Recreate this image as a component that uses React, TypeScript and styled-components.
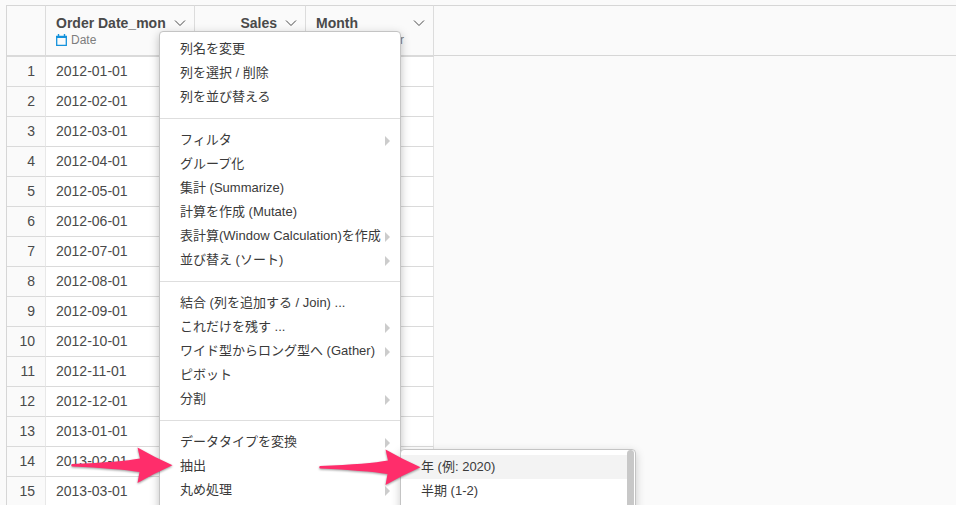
import React from "react";
import styled, { createGlobalStyle } from "styled-components";

const GlobalStyle = createGlobalStyle`
  *, *::before, *::after { box-sizing: border-box; }
  body {
    margin: 0;
    background: #fafafa;
    color: #4a4a4a;
    font-family: "Liberation Sans", "Noto Sans CJK JP", sans-serif;
    font-size: 14px;
  }
`;

const Page = styled.main`
  position: relative;
  height: 100vh;
  padding: 5px 0 0 6px;
  overflow: hidden;
`;

const Sheet = styled.div`
  display: flex;
  align-items: flex-start;
`;

const Filler = styled.div`
  flex: 1;
  height: 51px;
  border-top: 1px solid #d6d6d6;
  border-bottom: 1px solid #d6d6d6;
`;

const Grid = styled.table`
  width: 428px;
  table-layout: fixed;
  border-collapse: separate;
  border-spacing: 0;
  border-left: 1px solid #d6d6d6;
`;

const HeadCell = styled.th<{ $width: number }>`
  width: ${(p) => p.$width}px;
  height: 52px;
  padding: 8px 8px 0 10px;
  border-top: 1px solid #d6d6d6;
  border-right: 1px solid #dcdcdc;
  border-bottom: 2px solid #dadada;
  text-align: left;
  vertical-align: top;
  font-weight: 400;
`;

const HeadTitle = styled.div<{ $end?: boolean }>`
  display: flex;
  align-items: center;
  justify-content: ${(p) => (p.$end ? "flex-end" : "space-between")};
  gap: 8px;
  height: 17px;
  font-weight: 700;
  white-space: nowrap;
`;

const HeadButton = styled.button`
  display: flex;
  padding: 0;
  border: 0;
  background: none;
  color: #4a4a4a;
`;

const HeadType = styled.div<{ $end?: boolean }>`
  display: flex;
  align-items: center;
  justify-content: ${(p) => (p.$end ? "flex-end" : "flex-start")};
  gap: 4px;
  height: 17px;
  font-size: 12px;
  color: #7d7d7d;
`;

const TypeTail = styled.span`
  padding-right: 21px;
`;

const RowNumber = styled.th`
  height: 30px;
  padding: 0 10px 2px 0;
  border-right: 1px solid #e8e8e8;
  border-bottom: 1px solid #dadada;
  text-align: right;
  font-weight: 400;
`;

const Cell = styled.td`
  height: 30px;
  padding: 0 10px 2px;
  border-right: 1px solid #e4e4e4;
  border-bottom: 1px solid #dadada;
  background: #fff;
`;

const Item = styled.button<{ $active?: boolean }>`
  display: flex;
  align-items: center;
  justify-content: space-between;
  width: 100%;
  height: 24px;
  padding: 0 10px 0 20px;
  border: 0;
  background: ${(p) => (p.$active ? "#f3f3f3" : "transparent")};
  color: #3a3a3a;
  font: inherit;
  font-size: 13px;
  line-height: 22px;
  text-align: left;
  white-space: nowrap;
`;

const Menu = styled.div`
  position: absolute;
  top: 31px;
  left: 159px;
  width: 242px;
  padding: 4px 0 10px;
  background: #fff;
  border: 1px solid #c4c4c4;
  border-radius: 4px;
  box-shadow: 0 3px 10px rgba(0, 0, 0, 0.25);

  & > ${Item} {
    padding-top: 2px;
  }
`;

const Submenu = styled.div`
  position: absolute;
  top: 449px;
  left: 400px;
  display: flex;
  width: 236px;
  background: #fff;
  border: 1px solid #c4c4c4;
  border-radius: 4px;
  box-shadow: 0 3px 10px rgba(0, 0, 0, 0.2);
`;

const SubmenuList = styled.div`
  flex: 1;
  padding: 5px 0 10px;
`;

const ScrollThumb = styled.div`
  width: 7px;
  margin-right: 1px;
  border-radius: 4px;
  background: #c8c8c8;
`;

const Expander = styled.span`
  flex: none;
  margin-top: 2px;
  border-style: solid;
  border-width: 5px 0 5px 5px;
  border-color: transparent transparent transparent #cccccc;
`;

const Divider = styled.hr`
  height: 1px;
  margin: 10px 0 8px;
  border: 0;
  background: #dedede;
`;

const Pointer = styled.svg<{ $x: number; $y: number }>`
  position: absolute;
  left: ${(p) => p.$x}px;
  top: ${(p) => p.$y}px;
  width: 104px;
  height: 40px;
  overflow: visible;
  filter: drop-shadow(0 1px 1px rgba(0, 0, 0, 0.4));
  pointer-events: none;
`;

const Chevron = () => (
  <svg width="12" height="8" viewBox="0 0 12 8" fill="none" stroke="currentColor">
    <path d="M1 1.5 6 6.5 11 1.5" />
  </svg>
);

const CalendarIcon = () => (
  <svg width="11" height="12" viewBox="0 0 11 12" fill="none" stroke="#1492dc">
    <path d="M.7 2.5h9.6v8.8H.7z" strokeWidth="1.3" />
    <path d="M0 3h11" strokeWidth="2" />
    <path d="M2.5 0v3M8.5 0v3" strokeWidth="1.4" />
  </svg>
);

const Arrow = ({ x, y }: { x: number; y: number }) => (
  <Pointer $x={x} $y={y} viewBox="0 0 104 40" aria-hidden="true">
    <path
      fill="#ff2d6b"
      d="M1 16Q50 14 69 10.500L66.500 -.5Q83 9 101.500 17.300Q83 25.500 66.500 35L68.500 24Q46 20.500 1 18.500Q-.5 17.200 1 16Z"
    />
  </Pointer>
);

type Entry = { label: string; more?: boolean };

const groups: Entry[][] = [
  [{ label: "列名を変更" }, { label: "列を選択 / 削除" }, { label: "列を並び替える" }],
  [
    { label: "フィルタ", more: true },
    { label: "グループ化" },
    { label: "集計 (Summarize)" },
    { label: "計算を作成 (Mutate)" },
    { label: "表計算(Window Calculation)を作成", more: true },
    { label: "並び替え (ソート)", more: true },
  ],
  [
    { label: "結合 (列を追加する / Join) ..." },
    { label: "これだけを残す ...", more: true },
    { label: "ワイド型からロング型へ (Gather)", more: true },
    { label: "ピボット" },
    { label: "分割", more: true },
  ],
  [
    { label: "データタイプを変換", more: true },
    { label: "抽出", more: true },
    { label: "丸め処理", more: true },
  ],
];

const dates = Array.from({ length: 15 }, (_, i) => {
  const month = String((i % 12) + 1).padStart(2, "0");
  return `${2012 + Math.floor(i / 12)}-${month}-01`;
});

export default function App() {
  return (
    <>
      <GlobalStyle />
      <Page>
        <Sheet>
          <Grid>
            <thead>
              <tr>
                <HeadCell $width={39} />
                <HeadCell $width={149}>
                  <HeadTitle>
                    Order Date_mon
                    <HeadButton aria-label="Order Date_mon menu">
                      <Chevron />
                    </HeadButton>
                  </HeadTitle>
                  <HeadType>
                    <CalendarIcon />
                    Date
                  </HeadType>
                </HeadCell>
                <HeadCell $width={111}>
                  <HeadTitle $end>
                    Sales
                    <HeadButton aria-label="Sales menu">
                      <Chevron />
                    </HeadButton>
                  </HeadTitle>
                </HeadCell>
                <HeadCell $width={128}>
                  <HeadTitle>
                    Month
                    <HeadButton aria-label="Month menu">
                      <Chevron />
                    </HeadButton>
                  </HeadTitle>
                  <HeadType $end>
                    <TypeTail>r</TypeTail>
                  </HeadType>
                </HeadCell>
              </tr>
            </thead>
            <tbody>
              {dates.map((date, i) => (
                <tr key={date}>
                  <RowNumber scope="row">{i + 1}</RowNumber>
                  <Cell>{date}</Cell>
                  <Cell />
                  <Cell />
                </tr>
              ))}
            </tbody>
          </Grid>
          <Filler />
        </Sheet>

        <Menu role="menu">
          {groups.map((group, g) => (
            <React.Fragment key={g}>
              {g > 0 && <Divider />}
              {group.map((entry) => (
                <Item key={entry.label} role="menuitem">
                  {entry.label}
                  {entry.more && <Expander />}
                </Item>
              ))}
            </React.Fragment>
          ))}
        </Menu>

        <Submenu role="menu">
          <SubmenuList>
            <Item role="menuitem" $active>
              年 (例: 2020)
            </Item>
            <Item role="menuitem">半期 (1-2)</Item>
          </SubmenuList>
          <ScrollThumb />
        </Submenu>

        <Arrow x={71} y={448} />
        <Arrow x={319} y={450} />
      </Page>
    </>
  );
}
